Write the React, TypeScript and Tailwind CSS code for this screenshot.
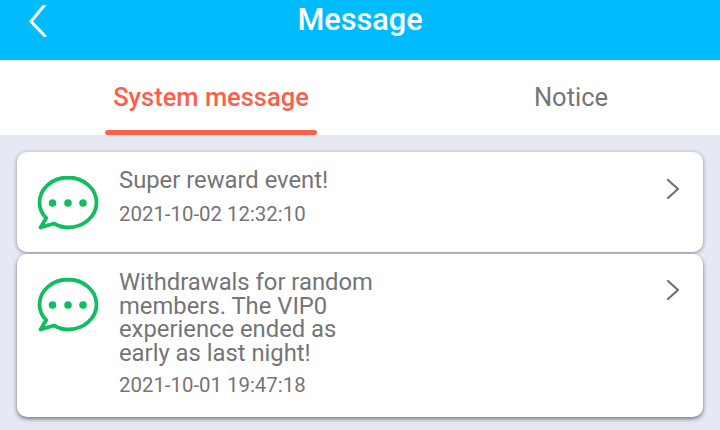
const font = "font-['Roboto',sans-serif]";

function BubbleIcon() {
  return (
    <svg width="62" height="56" viewBox="0 0 62 56" fill="none" className="shrink-0">
      <path
        d="M31 2.500C15.300 2.500 2.500 13.700 2.500 27.500c0 6 2.600 11.500 6.800 15.600L3.500 52.500l13.500-4c4.200 2.500 9 4 14 4 15.700 0 28.500-11.200 28.500-25S46.700 2.500 31 2.500Z"
        stroke="#10bd60"
        strokeWidth="3.800"
        strokeLinejoin="round"
      />
      <circle cx="15.500" cy="28" r="3.800" fill="#10bd60" />
      <circle cx="31" cy="28" r="3.800" fill="#10bd60" />
      <circle cx="46" cy="28" r="3.800" fill="#10bd60" />
    </svg>
  );
}

function Chevron() {
  return (
    <svg width="14" height="22" viewBox="0 0 14 22" fill="none" className="shrink-0">
      <path d="M2 2l10 9-10 9" stroke="#707070" strokeWidth="2.200" strokeLinecap="round" strokeLinejoin="round" />
    </svg>
  );
}

export default function App() {
  return (
    <div className={`w-[720px] h-[430px] overflow-hidden bg-[#e6e9f4] ${font}`}>
      <header className="relative h-[60px] bg-[#00bcff] flex items-start justify-center">
        <svg width="20" height="32" viewBox="0 0 20 32" fill="none" className="absolute left-[28px] top-[5px]">
          <path d="M17 2.500 3 19.500 17 34" transform="translate(0 -3)" stroke="#fff" strokeWidth="3" strokeLinecap="round" strokeLinejoin="round" />
        </svg>
        <h1 className="text-white text-[30.700px] leading-[40px] font-medium">Message</h1>
      </header>

      <nav className="h-[75px] bg-white flex">
        <div className="w-[422px] flex flex-col items-center">
          <span className="text-[#fa5f4b] text-[25.500px] leading-[33px] font-medium mt-[21px]">System message</span>
          <div className="mt-[16px] w-[212px] h-[5px] rounded-full bg-[#fa624d]" />
        </div>
        <div className="flex-1 flex justify-center">
          <span className="text-[#757575] text-[25.500px] leading-[33px] mt-[21px]">Notice</span>
        </div>
      </nav>

      <main className="px-[17px] pt-[17px] flex flex-col gap-[2px]">
        <div className="h-[100px] bg-white rounded-[10px] shadow-[0_1px_4px_rgba(0,0,0,0.4)] flex pl-[20px] pr-[23px]">
          <div className="mt-[23px]"><BubbleIcon /></div>
          <div className="flex-1 pl-[20px] pt-[12px] text-[#757575]">
            <p className="text-[23.800px] leading-[32px]">Super reward event!</p>
            <p className="text-[20.400px] leading-[28px] mt-[4px]">2021-10-02 12:32:10</p>
          </div>
          <div className="mt-[26px]"><Chevron /></div>
        </div>

        <div className="h-[163px] bg-white rounded-[10px] shadow-[0_2px_4px_rgba(0,0,0,0.5)] flex pl-[20px] pr-[23px]">
          <div className="mt-[23px]"><BubbleIcon /></div>
          <div className="flex-1 pl-[20px] pt-[17px] text-[#757575]">
            <p className="text-[23.800px] leading-[23.500px] w-[270px]">Withdrawals for random members. The VIP0 experience ended as early as last night!</p>
            <p className="text-[20.400px] leading-[28px] mt-[6px]">2021-10-01 19:47:18</p>
          </div>
          <div className="mt-[25px]"><Chevron /></div>
        </div>
      </main>
    </div>
  );
}
